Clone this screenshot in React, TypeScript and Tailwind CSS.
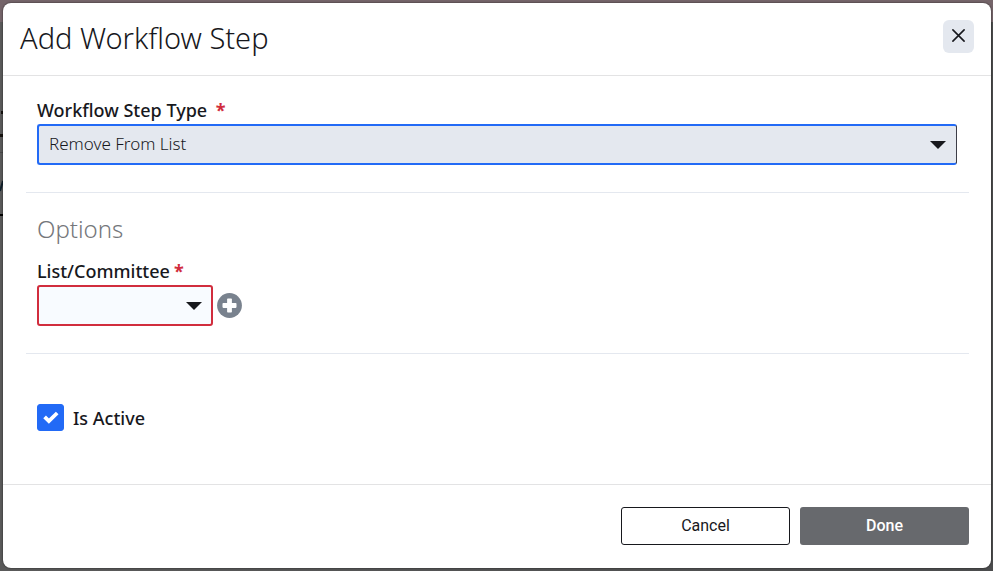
import { useState } from 'react'

const stepTypes = ['Remove From List', 'Add To List', 'Send Email']

function Caret() {
  return (
    <svg className="pointer-events-none absolute right-[11px] top-1/2 h-2 w-4 -translate-y-1/2" viewBox="0 0 16 8">
      <path d="M0 0h16L8 8z" fill="#17181d" />
    </svg>
  )
}

function PlusCircle() {
  return (
    <svg className="block h-[25px] w-[25px]" viewBox="0 0 25 25">
      <circle cx="12.5" cy="12.5" r="12.4" fill="#79828e" />
      <rect x="5.5" y="10.1" width="14" height="4.8" rx="0.8" fill="#fff" />
      <rect x="10.1" y="5.5" width="4.8" height="14" rx="0.8" fill="#fff" />
    </svg>
  )
}

// dimmed page that shows around the edges of the dialog
function Backdrop() {
  return (
    <div aria-hidden="true" className="absolute inset-0 bg-linear-to-r from-[#5a5a5a] to-[#4b4c4d]">
      <div className="h-[22px] bg-[#746469]" />
      <svg className="block h-[200px] w-[3px]" viewBox="0 0 3 200">
        <path d="M0 130.5h3" stroke="#484848" />
        <path d="M1 90.5h2M0 113.5h3" stroke="#15120f" strokeWidth="3" />
        <path d="M3 159L0 169" stroke="#10202c" strokeWidth="2" />
        <path d="M0 193h3" stroke="#000" strokeWidth="2" />
      </svg>
    </div>
  )
}

export default function App() {
  const [stepType, setStepType] = useState(stepTypes[0])
  const [list, setList] = useState('')
  const [isActive, setIsActive] = useState(true)

  return (
    <div className="relative min-h-screen pt-[3px] pr-[2px] pb-[3px] pl-[3px] font-['Noto_Sans',sans-serif] text-[#17181d]">
      <Backdrop />
      <div
        role="dialog"
        aria-labelledby="dialog-title"
        className="relative rounded-lg bg-white shadow-[0_0_2px_rgba(0,0,0,0.7)]"
      >
        <header className="flex items-start justify-between border-b border-[#e3e3e4] px-[17px] pt-[17px] pb-[19px]">
          <h1 id="dialog-title" className="text-[29px] leading-[36px] font-light">
            Add Workflow Step
          </h1>
          <button
            type="button"
            aria-label="Close"
            className="flex h-[33px] w-[31px] items-start justify-center rounded-md bg-[#e4e8ef] pt-[9px]"
          >
            <svg className="h-[13px] w-[13px]" viewBox="0 0 13 13" fill="none" stroke="#17181d" strokeWidth="1.6" strokeLinecap="round">
              <path d="M.9.9l11.2 11.2M12.1.9L.9 12.1" />
            </svg>
          </button>
        </header>

        <div className="pt-[22px] pr-[22px] pb-[52px] pl-[23px]">
          <section className="border-b border-[#e4e8ef] pr-3 pb-[27px] pl-[11px]">
            <label htmlFor="step-type" className="block pb-[2px] text-[18px] leading-[24px] font-medium">
              Workflow Step Type <span className="ml-1 font-bold text-[#d12d3d]">*</span>
            </label>
            <div className="relative">
              <select
                id="step-type"
                value={stepType}
                onChange={(e) => setStepType(e.target.value)}
                className="block h-[41px] w-full appearance-none rounded-[3px] border-2 border-r border-[#226af6] border-r-[#3c3d48] bg-[#e4e8ef] px-[10px] pb-[2px] text-[17px] font-light outline-none"
              >
                {stepTypes.map((type) => (
                  <option key={type}>{type}</option>
                ))}
              </select>
              <Caret />
            </div>
          </section>

          <section className="border-b border-[#e4e8ef] pt-[19px] pr-3 pb-[27px] pl-[11px]">
            <h2 className="pb-[2px] text-[24px] leading-[34px] font-light text-[#75777b]">Options</h2>
            <label htmlFor="list" className="mt-[11px] block pb-[2px] text-[18px] leading-[24px] font-medium">
              List/Committee<span className="ml-1 font-bold text-[#d12d3d]">*</span>
            </label>
            <div className="flex items-center gap-1">
              <div className="relative w-44">
                <select
                  id="list"
                  value={list}
                  onChange={(e) => setList(e.target.value)}
                  className="block h-[41px] w-full appearance-none rounded-[3px] border-2 border-[#d12d3d] bg-[#f8fbff] px-[10px] text-[17px] font-light outline-none"
                >
                  <option value="" />
                  <option>Members</option>
                </select>
                <Caret />
              </div>
              <button type="button" aria-label="Add list">
                <PlusCircle />
              </button>
            </div>
          </section>

          <label className="mt-[49px] ml-[11px] flex w-fit items-center gap-[9px] text-[18px] leading-[27px] font-medium">
            <span className="relative h-[27px] w-[27px]">
              <input
                type="checkbox"
                checked={isActive}
                onChange={(e) => setIsActive(e.target.checked)}
                className="block h-full w-full appearance-none rounded-[3px] border border-[#226af6] checked:bg-[#226af6]"
              />
              {isActive && (
                <svg className="pointer-events-none absolute inset-0 h-full w-full" viewBox="0 0 27 27" fill="none" stroke="#fff" strokeWidth="3.8">
                  <path d="M7.6 12.8l4.3 4.3 8.3-8.1" />
                </svg>
              )}
            </span>
            <span className="pt-[2px]">Is Active</span>
          </label>
        </div>

        <footer className="flex justify-end gap-[10px] border-t border-[#e3e3e4] px-[22px] pt-[22px] pb-[23px] font-[Roboto,sans-serif] text-[16px]">
          <button type="button" className="h-[38px] w-[169px] rounded-[3px] border border-[#17181d]">
            Cancel
          </button>
          <button type="button" className="h-[38px] w-[169px] rounded-[3px] bg-[#67696d] font-medium text-white">
            Done
          </button>
        </footer>
      </div>
    </div>
  )
}
